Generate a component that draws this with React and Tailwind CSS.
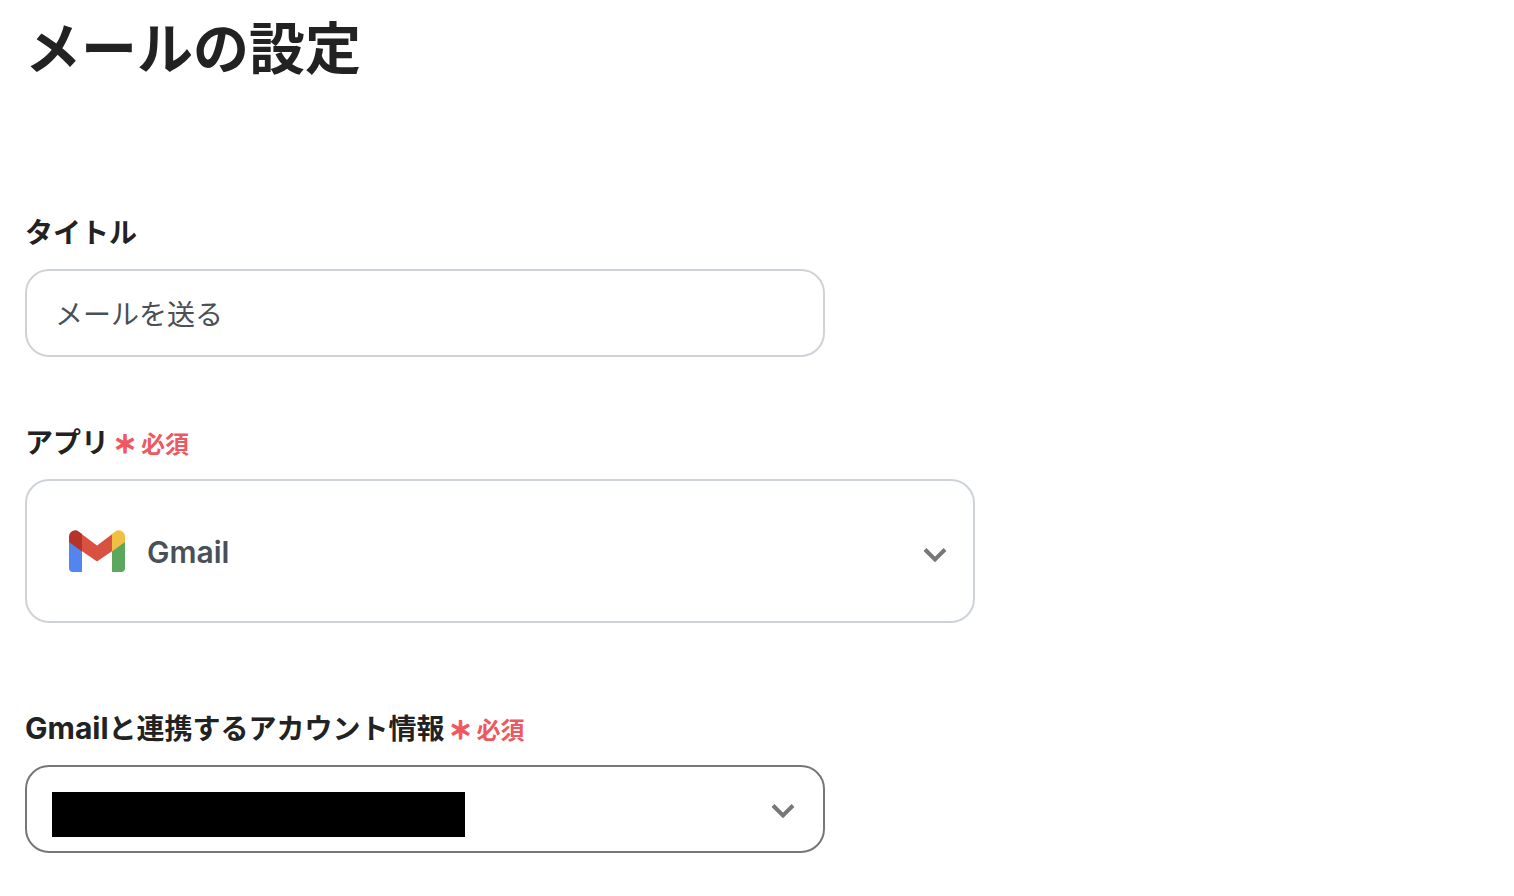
function GmailIcon({ className }) {
  return (
    <svg className={className} viewBox="0 0 56 42" aria-hidden="true">
      <path d="M0 11 13 19V42H4a4 4 0 0 1-4-4Z" fill="#5485ee" />
      <path d="M43 19 56 11V38a4 4 0 0 1-4 4H43Z" fill="#5aa75d" />
      <path d="M12 3.500 28 15.500 44 3.500V20.500L28 31.500 12 20.500Z" fill="#d95241" />
      <path d="M0 6.500A6.200 6.200 0 0 1 10 1.700L13 4V21.500L0 12Z" fill="#b43429" />
      <path d="M43 4 46 1.700A6.200 6.200 0 0 1 56 6.500V12L43 21.500Z" fill="#f1bf42" />
    </svg>
  );
}

function Chevron({ className }) {
  return (
    <svg className={className} viewBox="0 0 24 16" fill="none" stroke="#777" strokeWidth="4" aria-hidden="true">
      <path d="M2 2.500 12 12.500 22 2.500" />
    </svg>
  );
}

function Required() {
  return (
    <span className="ml-1 text-2xl text-[#ee5860]">
      <span className="mr-1 font-['Noto_Sans_CJK_JP'] font-black [-webkit-text-stroke:1px_#ee5860]">＊</span>必須
    </span>
  );
}

const labelClass = 'mb-4 block text-[28px] leading-10 font-bold';

function App() {
  return (
    <main className="min-h-screen bg-white px-[25px] pt-[9px] pb-10 font-['Inter','Noto_Sans_CJK_JP',sans-serif] text-[#222]" lang="ja">
      <h1 className="text-[56px] leading-20 font-bold">メールの設定</h1>

      <form className="mt-[124px]">
        <div className="max-w-[800px]">
          <label className={labelClass} htmlFor="title">
            タイトル
          </label>
          <input
            id="title"
            type="text"
            defaultValue="メールを送る"
            className="block h-[88px] w-full rounded-3xl border-2 border-[#ced3d8] px-7 text-[28px] text-[#495057]"
          />
        </div>

        <div className="mt-[66px] max-w-[950px]">
          <label className={labelClass} htmlFor="app">
            アプリ
            <Required />
          </label>
          <div className="grid items-center">
            <select
              id="app"
              defaultValue="gmail"
              className="col-start-1 row-start-1 h-36 w-full appearance-none rounded-3xl border-2 border-[#ced3d8] bg-white pt-0.5 pr-16 pl-[120px] text-3xl font-semibold text-[#495057]"
            >
              <option value="gmail">Gmail</option>
            </select>
            <GmailIcon className="pointer-events-none col-start-1 row-start-1 ml-11 h-[42px] w-14" />
            <Chevron className="pointer-events-none col-start-1 row-start-1 mt-2 mr-7 h-4 w-6 justify-self-end" />
          </div>
        </div>

        <div className="mt-[85px] max-w-[800px]">
          <label className={labelClass} htmlFor="account">
            <span className="text-3xl leading-10">Gmail</span>と連携するアカウント情報
            <Required />
          </label>
          <div className="grid items-center">
            <select
              id="account"
              className="col-start-1 row-start-1 h-[88px] w-full appearance-none rounded-3xl border-2 border-[#777] bg-white pr-16 pl-7 text-[28px]"
            >
              <option value="" />
            </select>
            <span className="pointer-events-none col-start-1 row-start-1 mt-2.5 ml-[27px] h-[45px] w-[413px] bg-black" />
            <Chevron className="pointer-events-none col-start-1 row-start-1 mt-1 mr-[30px] h-4 w-6 justify-self-end" />
          </div>
        </div>
      </form>
    </main>
  );
}

export default App;
